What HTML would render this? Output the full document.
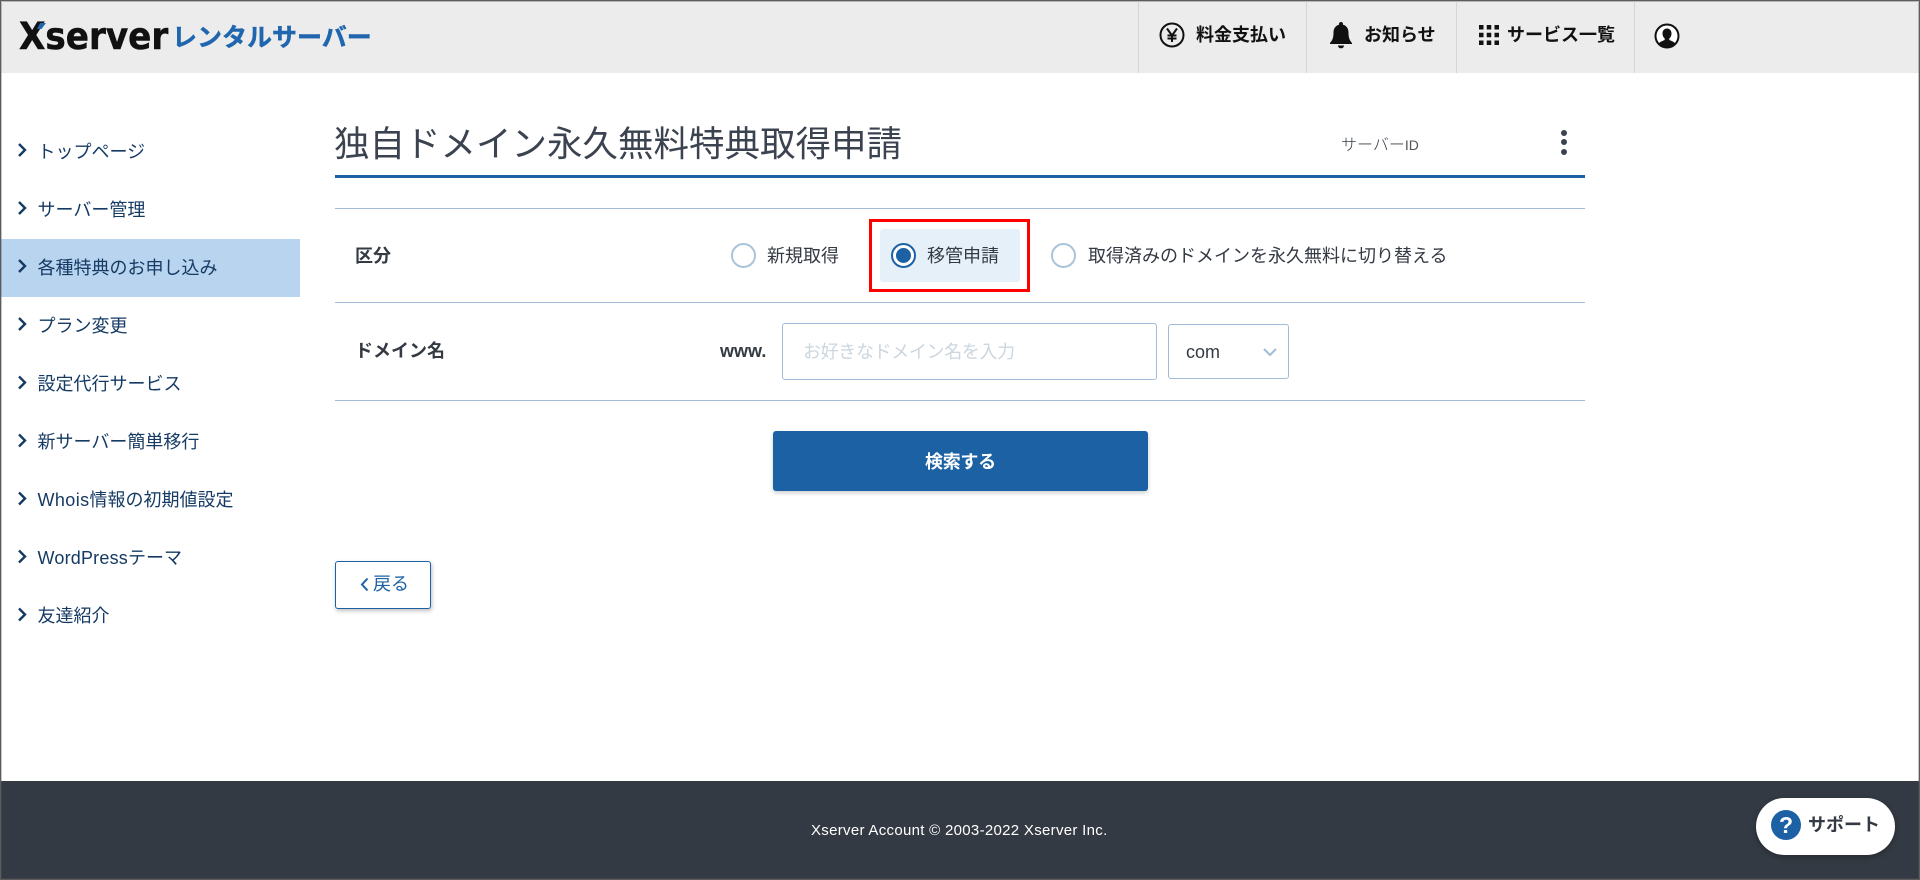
<!DOCTYPE html>
<html lang="ja"><head><meta charset="utf-8"><title>独自ドメイン永久無料特典取得申請</title>
<style>
*{box-sizing:border-box;margin:0;padding:0}
html,body{width:1920px;height:880px;overflow:hidden;background:#fff}
body{position:relative;font-family:"Liberation Sans","Noto Sans CJK JP",sans-serif;color:#343a43;font-size:18px}
.t{position:absolute;white-space:nowrap;line-height:30px;height:30px}
.a{position:absolute}
.b{font-weight:700}
.side{color:#153a63;left:37.500px}
.hd{color:#111;font-weight:700}
.line{position:absolute;left:335px;width:1250px;height:1px;background:#a0bcd6}
.sep{position:absolute;top:2px;width:1px;height:71px;background:#d6d6d6}
.radio{position:absolute;width:25px;height:25px;border-radius:50%;border:2px solid #aac4dc;background:#fff;top:243px}
</style></head><body>
<div class="a" style="left:0;top:0;width:1920px;height:73px;background:#ececec"></div>
<div class="t" style="left:19px;top:18px;font-family:'DejaVu Sans',sans-serif;font-size:37px;line-height:38px;height:38px;font-weight:700;color:#111;transform:scaleX(.925);transform-origin:0 50%;-webkit-text-stroke:.5px #111">Xserver</div>
<div class="a" style="left:37px;top:23px;width:9px;height:6px;background:#1f66ae;clip-path:polygon(35% 0,100% 0,50% 100%,0 100%)"></div>
<div class="t b" style="left:172px;top:23px;font-size:25px;color:#1f66ae;-webkit-text-stroke:.4px #1f66ae">レンタルサーバー</div>
<div class="sep" style="left:1138px"></div><div class="sep" style="left:1306px"></div><div class="sep" style="left:1456px"></div><div class="sep" style="left:1634px"></div>
<svg class="a" style="left:1159px;top:22px" width="26" height="26" viewBox="0 0 26 26" fill="none" stroke="#111"><circle cx="13" cy="13" r="11.5" stroke-width="2"/><path d="M8 6.5l5 7 5-7M13 13.5V20M8.5 13.5h9M8.5 16.5h9" stroke-width="2"/></svg>
<div class="t hd" style="left:1196px;top:20px">料金支払い</div>
<svg class="a" style="left:1329px;top:21px" width="24" height="28" viewBox="0 0 24 28" fill="#111"><path d="M12 1c1.200 0 2 .8 2 2v.8c3.600.9 5.500 3.900 5.500 7.700 0 4.700.8 7.500 3.500 10.500v1H1v-1c2.700-3 3.500-5.800 3.500-10.500 0-3.800 1.900-6.800 5.500-7.700V3c0-1.200.8-2 2-2z"/><path d="M9 24.500h6c0 1.700-1.300 2.800-3 2.800s-3-1.100-3-2.800z"/></svg>
<div class="t hd" style="left:1364px;top:20px">お知らせ</div>
<svg class="a" style="left:1479px;top:25px" width="20" height="20" fill="#111"><rect width="4.500" height="4.500"/><rect x="7.750" width="4.500" height="4.500"/><rect x="15.500" width="4.500" height="4.500"/><rect y="7.750" width="4.500" height="4.500"/><rect x="7.750" y="7.750" width="4.500" height="4.500"/><rect x="15.500" y="7.750" width="4.500" height="4.500"/><rect y="15.500" width="4.500" height="4.500"/><rect x="7.750" y="15.500" width="4.500" height="4.500"/><rect x="15.500" y="15.500" width="4.500" height="4.500"/></svg>
<div class="t hd" style="left:1507px;top:20px">サービス一覧</div>
<svg class="a" style="left:1654px;top:23px" width="26" height="26" viewBox="0 0 26 26"><circle cx="13" cy="13" r="11.500" fill="#fff" stroke="#111" stroke-width="2"/><path d="M13 5.500c2.800 0 4.500 2.200 4.500 5 0 2.200-1 4-2.200 5v1.500c2 .9 4.500 1.600 6 3.300A11 11 0 0 1 13 24.500a11 11 0 0 1-8.300-4.200c1.500-1.700 4-2.400 6-3.300v-1.500c-1.200-1-2.200-2.800-2.200-5 0-2.800 1.700-5 4.500-5z" fill="#111"/></svg>

<div class="a" style="left:0;top:239px;width:300px;height:58px;background:#b8d4ef"></div>
<svg class="a" style="left:0;top:0" width="40" height="640" fill="none" stroke="#153a63" stroke-width="2.400"><path d="M19 144l6 6-6 6M19 202l6 6-6 6M19 260l6 6-6 6M19 318l6 6-6 6M19 376.500l6 6-6 6M19 434.500l6 6-6 6M19 492.500l6 6-6 6M19 550.500l6 6-6 6M19 608.500l6 6-6 6"/></svg>
<div class="t side" style="top:137px">トップページ</div>
<div class="t side" style="top:195px">サーバー管理</div>
<div class="t side" style="top:253px">各種特典のお申し込み</div>
<div class="t side" style="top:311px">プラン変更</div>
<div class="t side" style="top:369px">設定代行サービス</div>
<div class="t side" style="top:427px">新サーバー簡単移行</div>
<div class="t side" style="top:485px"><span style="letter-spacing:.4px">Whois</span>情報の初期値設定</div>
<div class="t side" style="top:543px"><span style="letter-spacing:.2px">WordPress</span>テーマ</div>
<div class="t side" style="top:601px">友達紹介</div>

<div class="t" style="left:334px;top:122px;font-size:35.500px;line-height:44px;height:44px;font-weight:400;color:#3c4350">独自ドメイン永久無料特典取得申請</div>
<div class="t" style="left:1341px;top:130px;font-size:16px;font-weight:300">サーバー<span style="font-size:14px;color:#555">ID</span></div>
<div class="a" style="left:1561px;top:130px;width:6px;height:6px;border-radius:50%;background:#3c4350"></div>
<div class="a" style="left:1561px;top:139px;width:6px;height:6px;border-radius:50%;background:#3c4350"></div>
<div class="a" style="left:1561px;top:149px;width:6px;height:6px;border-radius:50%;background:#3c4350"></div>
<div class="a" style="left:335px;top:175px;width:1250px;height:3px;background:#1b61a4"></div>
<div class="line" style="top:208px"></div><div class="line" style="top:302px"></div><div class="line" style="top:400px"></div>

<div class="t b" style="left:355px;top:241px">区分</div>
<div class="radio" style="left:731px"></div>
<div class="t" style="left:767px;top:241px">新規取得</div>
<div class="a" style="left:880px;top:229px;width:140px;height:53px;background:#e6f0f9;border-radius:3px"></div>
<div class="a" style="left:869px;top:219px;width:161px;height:73px;border:3px solid #f00"></div>
<div class="radio" style="left:891px;border-color:#1b61a4;background:#fff"></div>
<div class="a" style="left:896px;top:248px;width:15px;height:15px;border-radius:50%;background:#1b61a4"></div>
<div class="t" style="left:927px;top:241px">移管申請</div>
<div class="radio" style="left:1051px"></div>
<div class="t" style="left:1088px;top:241px">取得済みのドメインを永久無料に切り替える</div>

<div class="t b" style="left:355px;top:336px">ドメイン名</div>
<div class="t b" style="left:720px;top:336px">www.</div>
<div class="a" style="left:782px;top:323px;width:375px;height:57px;border:1px solid #a0bcd6;border-radius:3px;background:#fff"></div>
<div class="t" style="left:803px;top:337px;color:#ccd6df;letter-spacing:-.35px">お好きなドメイン名を入力</div>
<div class="a" style="left:1168px;top:324px;width:121px;height:55px;border:1px solid #a0bcd6;border-radius:3px;background:#fff"></div>
<div class="t" style="left:1186px;top:337px">com</div>
<svg class="a" style="left:1263px;top:348px" width="14" height="9" fill="none" stroke="#a0bcd6" stroke-width="2"><path d="M1 1l6 6 6-6"/></svg>

<div class="a" style="left:773px;top:431px;width:375px;height:60px;background:#1b61a4;border-radius:3px;box-shadow:0 2px 4px rgba(0,0,0,.2)"></div>
<div class="t b" style="left:925px;top:447px;color:#fff;letter-spacing:-.3px">検索する</div>
<div class="a" style="left:335px;top:561px;width:96px;height:48px;border:1px solid #1b61a4;border-radius:3px;background:#fff;box-shadow:1px 2px 4px rgba(0,0,0,.25)"></div>
<svg class="a" style="left:360px;top:577px" width="9" height="15" fill="none" stroke="#1b61a4" stroke-width="2"><path d="M7.500 1.500L2 7.500l5.500 6"/></svg>
<div class="t" style="left:373px;top:569px;color:#1b61a4">戻る</div>

<div class="a" style="left:0;top:781px;width:1920px;height:99px;background:#343a43"></div>
<div class="t" style="left:811px;top:816px;font-size:15px;color:#fff;letter-spacing:.3px">Xserver Account © 2003-2022 Xserver Inc.</div>
<div class="a" style="left:1756px;top:798px;width:139px;height:57px;border-radius:29px;background:#fff;box-shadow:0 2px 6px rgba(0,0,0,.3)"></div>
<div class="a" style="left:1771px;top:810px;width:30px;height:30px;border-radius:50%;background:#1b61a4;color:#fff;font-weight:700;font-size:23px;line-height:30px;text-align:center">?</div>
<div class="t b" style="left:1808px;top:810px">サポート</div>
<div class="a" style="left:0;top:0;width:1920px;height:880px;border:1px solid #5c5c5c;box-shadow:inset 0 0 0 1px rgba(90,90,90,.35);pointer-events:none"></div>
</body></html>
